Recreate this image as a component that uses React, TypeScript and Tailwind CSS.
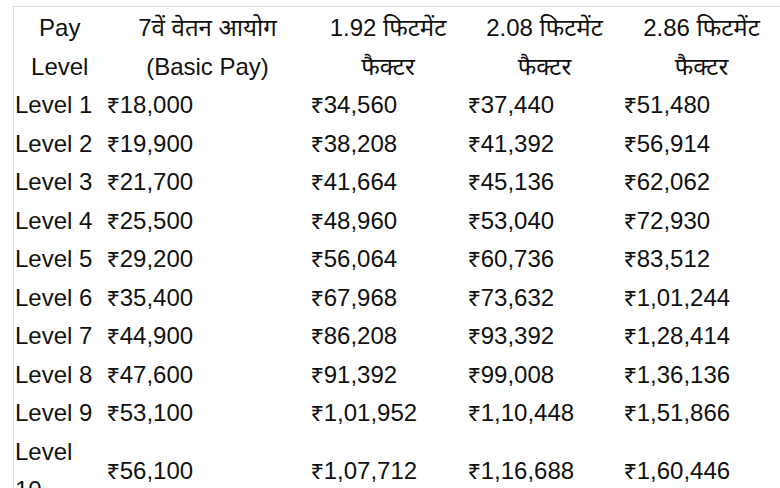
const rows = [
  ["Level 1", "₹18,000", "₹34,560", "₹37,440", "₹51,480"],
  ["Level 2", "₹19,900", "₹38,208", "₹41,392", "₹56,914"],
  ["Level 3", "₹21,700", "₹41,664", "₹45,136", "₹62,062"],
  ["Level 4", "₹25,500", "₹48,960", "₹53,040", "₹72,930"],
  ["Level 5", "₹29,200", "₹56,064", "₹60,736", "₹83,512"],
  ["Level 6", "₹35,400", "₹67,968", "₹73,632", "₹1,01,244"],
  ["Level 7", "₹44,900", "₹86,208", "₹93,392", "₹1,28,414"],
  ["Level 8", "₹47,600", "₹91,392", "₹99,008", "₹1,36,136"],
  ["Level 9", "₹53,100", "₹1,01,952", "₹1,10,448", "₹1,51,866"],
  ["Level 10", "₹56,100", "₹1,07,712", "₹1,16,688", "₹1,60,446"],
];

const headers = [
  ["Pay", "Level"],
  ["7वें वेतन आयोग", "(Basic Pay)"],
  ["1.92 फिटमेंट", "फैक्टर"],
  ["2.08 फिटमेंट", "फैक्टर"],
  ["2.86 फिटमेंट", "फैक्टर"],
];

export default function App() {
  return (
    <div className="h-[488px] w-[780px] overflow-hidden bg-white pl-[13px] pt-[6px]">
      <table
        className="w-[767px] table-fixed border-l border-t border-[#dadada] text-[24px] leading-[38.5px] text-[#111]"
        style={{ fontFamily: '"Liberation Sans", Arial, "Noto Sans Devanagari", "Noto Sans", sans-serif' }}
      >
        <colgroup>
          <col className="w-[92px]" />
          <col className="w-[204px]" />
          <col className="w-[157px]" />
          <col className="w-[156px]" />
          <col className="w-[158px]" />
        </colgroup>
        <thead>
          <tr>
            {headers.map(([top, bottom]) => (
              <th key={top} className="px-[1px] pt-[2px] text-center font-normal">
                <span className="block">{top}</span>
                <span className="block">{bottom}</span>
              </th>
            ))}
          </tr>
        </thead>
        <tbody>
          {rows.map((row) => (
            <tr key={row[0]}>
              {row.map((cell, i) => (
                <td key={i} className="px-[1px] text-left align-middle">
                  {cell}
                </td>
              ))}
            </tr>
          ))}
        </tbody>
      </table>
    </div>
  );
}
